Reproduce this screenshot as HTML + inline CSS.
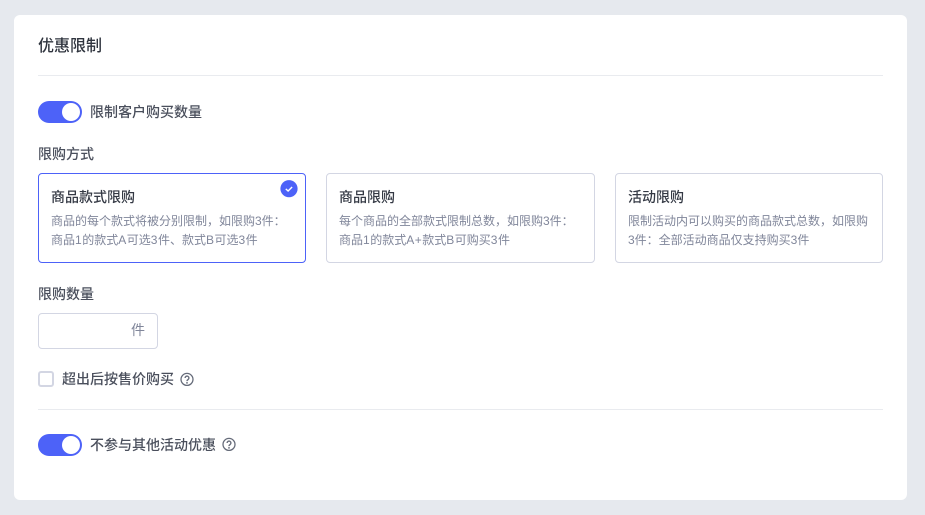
<!DOCTYPE html>
<html lang="zh">
<head>
<meta charset="utf-8">
<style>
html,body{margin:0;padding:0;width:925px;height:515px;overflow:hidden;background:#e6e9ee}
body{position:relative;font-family:"Liberation Sans","Noto Sans CJK SC",sans-serif;color:#3a3f4b}
div,span{position:absolute;box-sizing:border-box;white-space:nowrap}
svg{position:absolute;display:block}
em{font-style:normal;letter-spacing:.5px}
.panel{left:14px;top:15px;width:893px;height:485px;background:#fff;border-radius:6px}
.hr{left:38px;width:845px;height:1px;background:#e9ebef}
.t{font-size:14px;line-height:20px;color:#4a4f5c;font-weight:500}
.sw{left:38px;width:44px;height:22px;border-radius:11px;background:#4d62f8}
.sw i{position:absolute;left:24px;top:2px;width:18px;height:18px;border-radius:50%;background:#fff;display:block}
.card{top:173px;height:90px;border:1px solid #d3d6e3;border-radius:4px;background:#fff}
.card.on{border-color:#4d62f8}
.ct{left:12px;top:13px;font-size:14px;line-height:20px;color:#343944;font-weight:500}
.cd{left:12px;top:38px;font-size:12px;line-height:19px;color:#80869a}
</style>
</head>
<body>
<div class="panel"></div>
<div class="t" style="left:38px;top:36px;font-size:16px;line-height:22px;color:#2f343e">优惠限制</div>
<div class="hr" style="top:75px"></div>

<div class="sw" style="top:101px"><i></i></div>
<div class="t" style="left:90px;top:102px">限制客户购买数量</div>

<div class="t" style="left:38px;top:144px">限购方式</div>

<div class="card on" style="left:38px;width:268px">
  <div class="ct">商品款式限购</div>
  <div class="cd">商品的每个款式将被分别限制，如限购3件：<br>商品<em>1</em>的款式<em>A</em>可选<em>3</em>件、款式<em>B</em>可选<em>3</em>件</div>
</div>
<svg style="left:280px;top:180px" width="18" height="18" viewBox="0 0 18 18"><circle cx="9" cy="8.7" r="8.6" fill="#4d62f8"/><path d="M5.8 8.9l2.3 2.1 4-4" fill="none" stroke="#fff" stroke-width="1.4"/></svg>

<div class="card" style="left:326px;width:269px">
  <div class="ct">商品限购</div>
  <div class="cd">每个商品的全部款式限制总数，如限购3件：<br>商品<em>1</em>的款式<em>A+</em>款式<em>B</em>可购买<em>3</em>件</div>
</div>

<div class="card" style="left:615px;width:268px">
  <div class="ct">活动限购</div>
  <div class="cd">限制活动内可以购买的商品款式总数，如限购<br>3件：全部活动商品仅支持购买3件</div>
</div>

<div class="t" style="left:38px;top:284px">限购数量</div>
<div style="left:38px;top:313px;width:120px;height:36px;border:1px solid #d3d6e3;border-radius:4px;background:#fff"></div>
<div class="t" style="left:131px;top:320px;color:#80869a;font-weight:400">件</div>

<div style="left:38px;top:371px;width:16px;height:16px;border:2px solid #d3d6e3;border-radius:3px;background:#fff"></div>
<div class="t" style="left:62px;top:369px">超出后按售价购买</div>
<svg style="left:179px;top:372px" width="15" height="15" viewBox="0 0 15 15"><circle cx="8" cy="7.4" r="6" fill="none" stroke="#666c7a" stroke-width="1.3"/><path d="M6.1 6a1.9 1.9 0 1 1 2.9 1.6c-.7.4-1 .8-1 1.5" fill="none" stroke="#666c7a" stroke-width="1.4"/><circle cx="8" cy="10.9" r=".9" fill="#666c7a"/></svg>

<div class="hr" style="top:409px"></div>

<div class="sw" style="top:434px"><i></i></div>
<div class="t" style="left:90px;top:435px">不参与其他活动优惠</div>
<svg style="left:221px;top:437px" width="15" height="15" viewBox="0 0 15 15"><circle cx="8" cy="7.4" r="6" fill="none" stroke="#666c7a" stroke-width="1.3"/><path d="M6.1 6a1.9 1.9 0 1 1 2.9 1.6c-.7.4-1 .8-1 1.5" fill="none" stroke="#666c7a" stroke-width="1.4"/><circle cx="8" cy="10.9" r=".9" fill="#666c7a"/></svg>
</body>
</html>
